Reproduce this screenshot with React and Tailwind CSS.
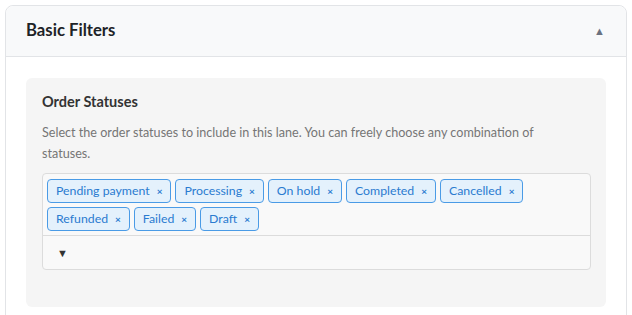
const statuses = [
  'Pending payment',
  'Processing',
  'On hold',
  'Completed',
  'Cancelled',
  'Refunded',
  'Failed',
  'Draft',
];

const Tag = ({ label }) => (
  <span className="inline-flex h-6 items-center gap-[7px] rounded border border-[#4a9be6] bg-[#e4f1fc] pl-2 pr-2 text-[12.3px] text-[#2a7bd0]">
    {label}
    <span className="text-[10px] font-bold leading-none">×</span>
  </span>
);

export default function App() {
  return (
    <div className="h-[315px] w-[632px] overflow-hidden bg-white pt-[5px] pl-[5px] pr-[5px] font-['Lato',sans-serif]">
      <div className="min-h-[340px] rounded-t-lg border border-[#e2e4e7] bg-white">
        {/* Header */}
        <div className="flex h-[51px] items-center justify-between rounded-t-lg border-b border-[#e2e4e7] bg-[#f8f9fa] pl-5 pr-[21px]">
          <h2 className="text-[16.7px] font-bold text-[#1d2327]">Basic Filters</h2>
          <span className="text-[11px] text-[#6b7280]">▲</span>
        </div>

        {/* Body */}
        <div className="px-5 pt-[21px] pb-5">
          <div className="rounded-md bg-[#f5f5f5] pl-4 pr-[15px] pt-[14px] pb-[37px]">
            <h3 className="text-[14.5px] font-bold leading-5 text-[#333]">Order Statuses</h3>
            <p className="mt-[10px] pr-3 text-[12.6px] leading-[21px] text-[#757575]">
              Select the order statuses to include in this lane. You can freely choose any combination of statuses.
            </p>
            <div className="mt-[9px] rounded border border-[#dcdcdc] bg-[#f9f9f9]">
              <div className="flex flex-wrap gap-1 border-b border-[#dcdcdc] px-1 pt-[5px] pb-1">
                {statuses.map((s) => (
                  <Tag key={s} label={s} />
                ))}
              </div>
              <div className="flex h-[33px] items-center pl-[14px] pt-[2px]">
                <span className="text-[11px] text-[#333]">▼</span>
              </div>
            </div>
          </div>
        </div>
      </div>
    </div>
  );
}
